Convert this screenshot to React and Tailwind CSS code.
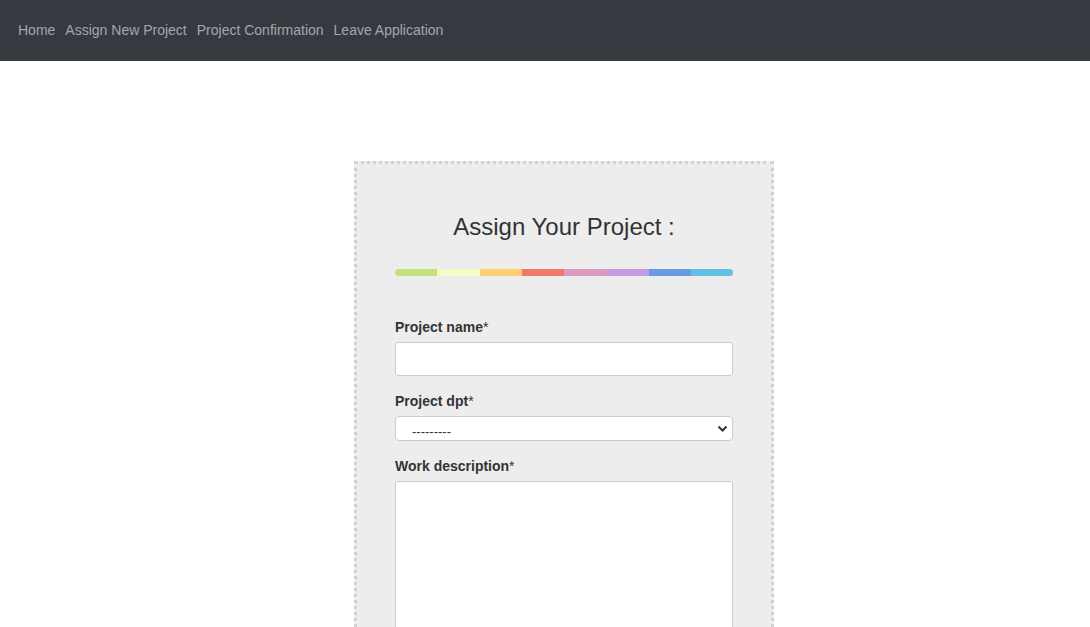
const STRIPES = [
  '#c5e17a',
  '#f5fbc6',
  '#fdce72',
  '#f1786c',
  '#dc9bbb',
  '#c59be0',
  '#679ce0',
  '#62c2e4',
]

const NAV_LINKS = ['Home', 'Assign New Project', 'Project Confirmation', 'Leave Application']

function Navbar() {
  return (
    <nav className="flex h-[61px] items-center bg-[#343a40] px-[18px]">
      <ul className="flex gap-[10px] text-[14px] text-[#a4a7aa]">
        {NAV_LINKS.map((link) => (
          <li key={link}>
            <a href="#" className="hover:text-white">
              {link}
            </a>
          </li>
        ))}
      </ul>
    </nav>
  )
}

function Field({ label, children }) {
  return (
    <div className="mb-[15px]">
      <label className="mb-[5px] block text-[14px] font-bold leading-[20px] text-[#333]">
        {label}
        <span className="font-normal">*</span>
      </label>
      {children}
    </div>
  )
}

function AssignForm() {
  return (
    <div className="mt-[100px] ml-[354px] w-[420px] border-[3px] border-dotted border-[#d2d2d2] bg-[#ededed] px-[38px] pt-[48px] pb-6">
      <h2 className="text-center text-[24px] leading-[30px] text-[#333]">Assign Your Project :</h2>

      <div className="mt-[27px] mb-[41px] flex h-[7px] overflow-hidden rounded-full">
        {STRIPES.map((color) => (
          <div key={color} className="flex-1" style={{ backgroundColor: color }} />
        ))}
      </div>

      <form>
        <Field label="Project name">
          <input
            type="text"
            className="block h-[34px] w-full rounded-[3px] border border-[#ccc] bg-white px-3 text-[14px] outline-none"
          />
        </Field>

        <Field label="Project dpt">
          <div className="relative">
            <select className="block h-[25px] w-full appearance-none rounded-[4px] border border-[#ccc] bg-white pt-[7px] pl-[16px] text-[13px] leading-[16px] text-[#333] outline-none">
              <option>---------</option>
            </select>
            <svg
              className="pointer-events-none absolute top-[9px] right-[5px] h-[8px] w-[11px]"
              viewBox="0 0 11 8"
              fill="none"
              stroke="#333"
              strokeWidth="2"
            >
              <path d="M1.5 1.5 5.5 5.5 9.5 1.5" />
            </svg>
          </div>
        </Field>

        <Field label="Work description">
          <textarea className="block h-[200px] w-full resize-none rounded-[3px] border border-[#ccc] bg-white p-2 text-[14px] outline-none" />
        </Field>
      </form>
    </div>
  )
}

export default function App() {
  return (
    <div className="min-h-screen bg-white font-['Liberation_Sans',Arial,sans-serif]">
      <Navbar />
      <AssignForm />
    </div>
  )
}
